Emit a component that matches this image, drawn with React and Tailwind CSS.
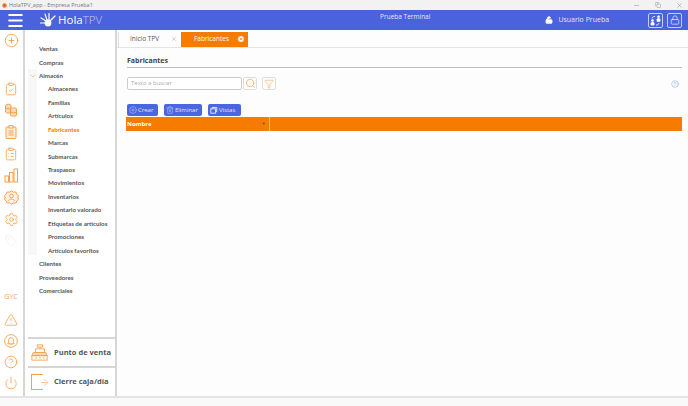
import {
  Menu,
  CirclePlus,
  ClipboardCheck,
  ClipboardList,
  Settings,
  Tag,
  TriangleAlert,
  CircleHelp,
  Power,
  ChevronDown,
  X,
  Minus,
  Copy,
  Search,
  Filter,
  Trash2,
  LockOpen,
  Lock,
  ArrowRight,
  CircleX,
} from "lucide-react";

const menuItems = [
  { label: "Ventas" },
  { label: "Compras" },
  { label: "Almacén", open: true },
  { label: "Almacenes", sub: true },
  { label: "Familias", sub: true },
  { label: "Artículos", sub: true },
  { label: "Fabricantes", sub: true, active: true },
  { label: "Marcas", sub: true },
  { label: "Submarcas", sub: true },
  { label: "Traspasos", sub: true },
  { label: "Movimientos", sub: true },
  { label: "Inventarios", sub: true },
  { label: "Inventario valorado", sub: true },
  { label: "Etiquetas de artículos", sub: true },
  { label: "Promociones", sub: true },
  { label: "Artículos favoritos", sub: true },
  { label: "Clientes" },
  { label: "Proveedores" },
  { label: "Comerciales" },
];

function RailIcon({ icon: Icon, size = 14, className = "text-[#f7a04b]" }) {
  return (
    <div className="flex h-[21.8px] items-center justify-center">
      <Icon size={size} strokeWidth={1.4} className={className} />
    </div>
  );
}

function BottomIcon({ icon: Icon, size = 14 }) {
  return (
    <div className="flex h-[21px] items-center justify-center">
      <Icon size={size} strokeWidth={1.4} className="text-[#f7a04b]" />
    </div>
  );
}

function StockIcon({ size }) {
  return (
    <svg width={size} height={size} viewBox="0 0 14 14" fill="#fbd9b5" stroke="#f7a04b" strokeWidth="1">
      <path d="M1.5 2.5C1.5 0.8 7 0.8 7 2.5V9C7 10.5 1.5 10.5 1.5 9Z" />
      <path d="M1.5 5C2.5 6 6 6 7 5" fill="none" />
      <path d="M6.5 6C6.5 4.5 12.5 4.5 12.5 6V12C12.5 13.6 6.5 13.6 6.5 12Z" />
      <path d="M6.5 9C8 10 11 10 12.5 9" fill="none" />
    </svg>
  );
}

function NotesIcon({ size }) {
  return (
    <svg width={size} height={size} viewBox="0 0 14 14" fill="#fdeedd" stroke="#f7a04b" strokeWidth="1">
      <rect x="2" y="2" width="10" height="11.5" rx="1" />
      <rect x="5" y="0.7" width="4" height="2.3" fill="#ffffff" />
      <path d="M4.5 6H9.5M4.5 8H9.5M4.5 10H9.5" />
    </svg>
  );
}

function BarsIcon({ size }) {
  return (
    <svg width={size} height={size} viewBox="0 0 15 15" fill="none" stroke="#f7a04b" strokeWidth="1">
      <rect x="1" y="8" width="3.5" height="6" />
      <rect x="5.5" y="4.5" width="3.5" height="9.5" />
      <rect x="10" y="1" width="3.5" height="13" />
    </svg>
  );
}

function BadgeIcon({ size }) {
  return (
    <svg width={size} height={size} viewBox="0 0 15 15" fill="#fdeedd" stroke="#f7a04b" strokeWidth="1">
      <path d="M7.5 0.8L9.5 2L11.8 2L12.8 4L14.4 5.5L14 7.5L14.4 9.5L12.8 11L11.8 13L9.5 13L7.5 14.2L5.5 13L3.2 13L2.2 11L0.6 9.5L1 7.5L0.6 5.5L2.2 4L3.2 2L5.5 2Z" />
      <circle cx="7.5" cy="6" r="1.8" fill="#ffffff" />
      <path d="M4.5 11C5 8.5 10 8.5 10.5 11" fill="#ffffff" />
    </svg>
  );
}

function BellIcon({ size }) {
  return (
    <svg width={size} height={size} viewBox="0 0 15 15" fill="none" stroke="#f7a04b" strokeWidth="1">
      <circle cx="7.5" cy="7.5" r="6.8" />
      <path d="M4 10.5C5 9.5 5 8 5 6.5C5 3 10 3 10 6.5C10 8 10 9.5 11 10.5Z" />
      <path d="M6.7 11.5H8.3" />
    </svg>
  );
}

function SwitchUserIcon() {
  return (
    <svg width="11" height="11" viewBox="0 0 11 11" fill="white" stroke="white" strokeWidth="0.8">
      <circle cx="2.5" cy="5.5" r="1" />
      <path d="M1 10V8C1 7 4 7 4 8V10Z" />
      <circle cx="8.5" cy="1.7" r="1" />
      <path d="M7 6.3V4.3C7 3.3 10 3.3 10 4.3V6.3Z" />
      <path d="M2 3.5C2 2 3.5 1.5 5 1.5M9 8C9 9.5 7.5 10 6 10" fill="none" />
    </svg>
  );
}

function Rail() {
  return (
    <div className="flex w-[25px] shrink-0 flex-col items-center border-r-2 border-[#d6d6d6] pr-[1px]">
      <RailIcon icon={CirclePlus} size={15} />
      <div className="mt-[26px] w-full">
        <RailIcon icon={ClipboardCheck} />
        <RailIcon icon={StockIcon} />
        <RailIcon icon={NotesIcon} />
        <RailIcon icon={ClipboardList} />
        <RailIcon icon={BarsIcon} size={15} />
        <RailIcon icon={BadgeIcon} size={15} />
        <RailIcon icon={Settings} size={15} />
        <RailIcon icon={Tag} size={12} className="text-[#ececec]" />
      </div>
      <div className="mt-auto w-full pb-[2px]">
        <p className="mb-[7px] text-center text-[7px] text-[#f7a04b]">GYC</p>
        <BottomIcon icon={TriangleAlert} />
        <BottomIcon icon={BellIcon} />
        <BottomIcon icon={CircleHelp} />
        <BottomIcon icon={Power} />
      </div>
    </div>
  );
}

function RegisterIcon() {
  return (
    <svg width="17" height="17" viewBox="0 0 19 18" fill="none" stroke="#f7a04b" strokeWidth="1">
      <rect x="7" y="0.5" width="6" height="2.5" />
      <path d="M10 3V5" />
      <path d="M5 5H15V9H5Z" />
      <path d="M2.5 9H16.5L18 12.5H1Z" fill="#fbd9b5" />
      <rect x="1" y="12.5" width="17" height="5" />
      <path d="M5 15H7M9 15H11M13 15H15" />
    </svg>
  );
}

function Sidebar() {
  return (
    <div className="flex w-[92px] shrink-0 flex-col border-r-2 border-[#d6d6d6]">
      <div className="relative flex-1 pt-[12px]">
        <div className="absolute top-[39px] bottom-[82px] left-[3px] w-[9px] bg-[#f7f7f7]" />
        {menuItems.map((item) => (
          <div
            key={item.label}
            className={`relative flex h-[13.45px] items-center font-['Lato',sans-serif] text-[6.2px] font-bold whitespace-nowrap ${
              item.sub ? "pl-[23px]" : "pl-[14px]"
            } ${item.active ? "text-[#f57c00]" : "text-[#555555]"}`}
          >
            {item.open && (
              <ChevronDown size={8} strokeWidth={1.6} className="absolute left-[3.5px] text-[#f7a04b]" />
            )}
            {item.label}
          </div>
        ))}
      </div>
      <div className="ml-[3px] flex h-[29px] items-center gap-[6px] border-t-2 border-[#d6d6d6] pt-[1px] pl-[3px]">
        <RegisterIcon />
        <span className="text-[7.5px] font-bold whitespace-nowrap text-[#555555]">Punto de venta</span>
      </div>
      <div className="ml-[3px] flex h-[30px] items-center gap-[6px] border-t-2 border-[#d6d6d6] pt-[1px] pl-[3px]">
        <div className="relative flex h-[16px] w-[17px] items-center">
          <div className="h-full w-[12px] border border-r-0 border-[#f7a04b]" />
          <ArrowRight size={11} strokeWidth={1.2} className="absolute right-[-2px] text-[#f7a04b]" />
        </div>
        <span className="text-[7.5px] font-bold whitespace-nowrap text-[#555555]">Cierre caja/día</span>
      </div>
    </div>
  );
}

function Tabs() {
  return (
    <div className="flex h-[18px] shrink-0 items-end border-b border-[#e4e4e4] pl-[1px]">
      <div className="flex h-[15.5px] w-[63px] items-center justify-between border-l border-[#dddddd] pr-[4px] pl-[11px] text-[6.5px] text-[#555555]">
        Inicio TPV
        <X size={6} className="text-[#aaaaaa]" />
      </div>
      <div className="flex h-[15.5px] w-[67px] items-center justify-between bg-[#f57c00] pr-[3px] pl-[13px] text-[6.5px] text-white">
        Fabricantes
        <CircleX size={8} className="fill-white text-[#f57c00]" />
      </div>
    </div>
  );
}

function LayersIcon({ size, strokeWidth }) {
  return (
    <svg width={size} height={size} viewBox="0 0 10 10" fill="none" stroke="currentColor" strokeWidth={strokeWidth}>
      <rect x="1" y="3.5" width="6" height="5.5" />
      <path d="M2.5 3.5V1.8H8.5V7H7" />
    </svg>
  );
}

function ActionButton({ icon: Icon, children, className }) {
  return (
    <button
      className={`flex h-[12px] items-center gap-[1px] rounded-[2px] bg-[#4a66e0] pl-[2px] text-[6px] whitespace-nowrap text-[#e4e8fb] ${className}`}
    >
      <Icon size={8} strokeWidth={1.2} />
      {children}
    </button>
  );
}

function Content() {
  return (
    <div className="flex min-w-0 flex-1 flex-col bg-[#fdfdfd]">
      <Tabs />
      <div className="flex-1 pt-[8px] pr-[6px] pl-[10px]">
        <div className="flex h-[11px] items-center text-[7px] font-bold text-[#444444]">Fabricantes</div>
        <div className="h-[1px] bg-[#bdbdbd]" />
        <div className="mt-[9px] flex h-[13px] items-center">
          <div className="flex h-[12.5px] w-[115px] items-center rounded-[2px] border border-[#cccccc] bg-white pl-[3px] text-[6px] text-[#aaaaaa]">
            Texto a buscar
          </div>
          <div className="ml-[1px] flex h-[12.5px] w-[14px] items-center justify-center rounded-[2px] border border-[#dddddd] bg-white">
            <Search size={11} strokeWidth={1.5} className="text-[#f7a04b]" />
          </div>
          <div className="ml-[5px] flex h-[12.5px] w-[14px] items-center justify-center rounded-[2px] border border-[#dddddd] bg-white">
            <Filter size={10} strokeWidth={1.3} className="text-[#f7a04b]" />
          </div>
          <CircleHelp size={8} strokeWidth={1.2} className="mr-[3px] ml-auto text-[#6f83e6]" />
        </div>
        <div className="mt-[14px] flex gap-[6px]">
          <ActionButton icon={CirclePlus} className="w-[31px]">Crear</ActionButton>
          <ActionButton icon={Trash2} className="w-[38px]">Eliminar</ActionButton>
          <ActionButton icon={LayersIcon} className="w-[33px]">Vistas</ActionButton>
        </div>
        <div className="mt-[1px] -ml-[1px] flex h-[14px] bg-[#f57c00]">
          <div className="flex w-[143.5px] items-center justify-between border-r border-[#fbbd80] pr-[3px] pl-[1px] text-[6px] font-bold text-white">
            Nombre
            <span className="text-[4px] text-[#555555]">▼</span>
          </div>
        </div>
      </div>
    </div>
  );
}

export default function App() {
  return (
    <div className="flex h-[406px] w-[688px] flex-col overflow-hidden bg-[#f9f9f9] font-['Open_Sans',sans-serif]">
      <div className="flex h-[10px] shrink-0 items-center bg-[#f2f2f2] pr-[5px] pl-[2px] text-[5.5px] text-[#777777]">
        <span className="mr-[2px] h-[5px] w-[5px] rounded-full border border-[#f7a04b] bg-[#e2603a]" />
        HolaTPV_app - Empresa Prueba1
        <div className="ml-auto flex items-center gap-[15px] text-[#999999]">
          <Minus size={7} />
          <Copy size={6} />
          <X size={7} />
        </div>
      </div>

      <div className="flex h-[20px] shrink-0 items-center bg-[#4a62dc] text-white">
        <Menu size={19} strokeWidth={2.4} className="ml-[6px]" />
        <svg width="17" height="15" viewBox="0 0 17 15" fill="white" stroke="white" className="ml-[15px]">
          <circle cx="8" cy="10" r="3.4" stroke="none" />
          <path d="M6 8L1 5M6 10L0.5 10M7 7L5 1M9 7L9 0.5M10 8L15 3" strokeWidth="1.2" strokeLinecap="round" />
        </svg>
        <span className="ml-[1px] text-[11.5px] whitespace-nowrap">
          <span className="font-normal">Hola</span>
          <span className="font-light text-[#c5cdf4]">TPV</span>
        </span>
        <span className="mb-[7px] ml-[278px] text-[6.5px] whitespace-nowrap text-[#e4e8fb]">Prueba Terminal</span>
        <LockOpen size={8} strokeWidth={2.4} className="ml-[115px] fill-white" />
        <span className="ml-[5px] text-[7px] whitespace-nowrap text-[#e4e8fb]">Usuario Prueba</span>
        <div className="ml-auto flex h-[15px] w-[15px] items-center justify-center rounded-[2px] border border-[#c5cdf4]">
          <SwitchUserIcon />
        </div>
        <div className="mr-[6px] ml-[4px] flex h-[15px] w-[15px] items-center justify-center rounded-[2px] border border-[#c5cdf4]">
          <Lock size={10} strokeWidth={1.5} />
        </div>
      </div>

      <div className="flex h-[367.5px] shrink-0 border-b-2 border-[#e4e4e4] bg-white">
        <Rail />
        <Sidebar />
        <Content />
      </div>
    </div>
  );
}
